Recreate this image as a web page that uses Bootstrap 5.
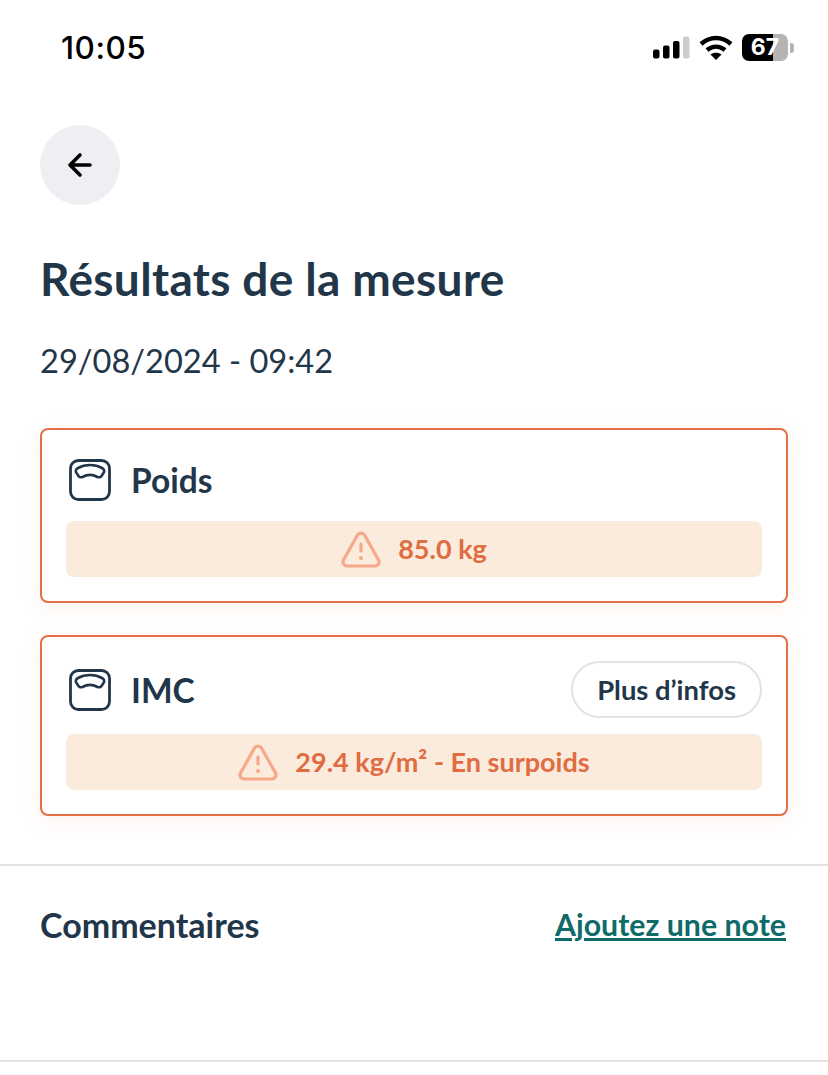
<!DOCTYPE html>
<html lang="fr"><head><meta charset="utf-8"><title>Résultats</title>
<link rel="stylesheet" href="https://cdn.jsdelivr.net/npm/bootstrap@5.3.0/dist/css/bootstrap.min.css">
<style>
html,body{height:1075px;overflow:hidden;background:#fff}
body{font-family:Lato,sans-serif;color:#22364a}
.status-row{height:97px;padding:31px 34px 0 61px;align-items:flex-start}
.clock{font-family:Inter,sans-serif;font-weight:500;font-size:31.500px;line-height:34px;color:#000;letter-spacing:.5px}
.status-icons{margin-top:3px;gap:9px}
.batt{width:46px;height:27px;border-radius:7px;background:linear-gradient(90deg,#000 0,#000 67%,#b4b4b4 67%);color:#fff;font:700 23px/27px Inter,sans-serif;text-align:center}
.batt-wrap{gap:2px}
.batt-cap{width:4px;height:10px;background:#b4b4b4;border-radius:0 3px 3px 0}
.main-pad{padding:0 40px}
.back-btn{width:80px;height:80px;margin-top:28px;background:#eeeff3;border:0}
.page-title{font-size:46px;line-height:50px;font-weight:700;letter-spacing:.35px;margin:49px 0 0;color:#22364a}
.page-date{font-size:32.600px;line-height:40px;margin:37px 0 0;color:#22364a;font-weight:400}
.res-card{border:2px solid #e26f47;border-radius:8px;padding:24px 24px 24px;box-shadow:0 4px 20px rgba(227,111,71,.1)}
.res-card+.res-card{margin-top:32px}
.res-head{min-height:51px;gap:20px;margin-bottom:16px}
.scale-ico{margin-left:3px}
.res-name{font-size:33.500px;font-weight:700;line-height:40px;margin:0}
.res-band{height:56px;background:#fbebdd;border-radius:8px;color:#e06c42;font-size:27px;font-weight:700;gap:17px}
.info-pill{height:57px;border:2px solid #e2e3e8;color:#22364a;font-size:27.400px;font-weight:700;padding:0 24px;background:#fff}
.sep{border-top:2px solid #e4e4e4;opacity:1;margin:0}
.notes-row{height:122px;padding:0 42px 4px 40px}
.notes-title{font-size:34px;font-weight:700;margin:0;color:#22364a}
.notes-link{font-size:30.300px;font-weight:700;color:#0f6b68}
</style></head><body>
<div class="d-flex justify-content-between status-row">
 <span class="clock">10:05</span>
 <div class="d-flex align-items-center status-icons">
  <svg width="37" height="24" viewBox="0 0 37 24"><rect x="0" y="13.500" width="6.500" height="9" rx="2" fill="#000"/><rect x="10" y="9.500" width="6.500" height="13" rx="2" fill="#000"/><rect x="20" y="5" width="6.500" height="17.500" rx="2" fill="#000"/><rect x="30" y="0.500" width="6.500" height="22" rx="2" fill="#ccc"/></svg>
  <svg width="34" height="26" viewBox="0 0 34 26"><path d="M2 9C11 1 23 1 32 9M8 15C13.500 10.500 20.500 10.500 26 15" fill="none" stroke="#000" stroke-width="4.500"/><path d="M17 25 11.500 19.500C14.500 17 19.500 17 22.500 19.500Z" fill="#000"/></svg>
  <div class="d-flex align-items-center batt-wrap"><div class="batt">67</div><div class="batt-cap"></div></div>
 </div>
</div>
<div class="main-pad">
 <button class="btn rounded-circle p-0 d-flex align-items-center justify-content-center back-btn" aria-label="Retour">
  <svg width="26" height="26" viewBox="0 0 26 26"><path d="M23 13H3M13 3 3 13 13 23" fill="none" stroke="#000" stroke-width="3.600" stroke-linecap="round" stroke-linejoin="round"/></svg>
 </button>
 <h1 class="page-title">Résultats de la mesure</h1>
 <p class="page-date">29/08/2024 - 09:42</p>
 <div style="height:47px"></div>
 <div class="res-card bg-white">
  <div class="d-flex align-items-center res-head">
   <svg class="scale-ico" width="42" height="42" viewBox="0 0 42 42"><rect x="1.500" y="1.500" width="39" height="39" rx="8" fill="none" stroke="#22364a" stroke-width="2.800"/><path d="M9 9C16 5 26 5 33 9C35 10 36 12 34.500 14L32.500 17C31.500 18.500 30 18.500 28.500 18C24 15.500 18 15.500 13.500 18C12 18.500 10.500 18.500 9.500 17L7.500 14C6 12 7 10 9 9Z" fill="none" stroke="#22364a" stroke-width="2.600" stroke-linejoin="round"/></svg>
   <h2 class="res-name">Poids</h2>
  </div>
  <div class="d-flex align-items-center justify-content-center res-band">
   <svg width="40" height="37" viewBox="0 0 40 37"><path d="M16.500 4C18 1.500 22 1.500 23.500 4L37.500 29C39 32 37 35 34 35H6C3 35 1 32 2.500 29Z" fill="none" stroke="#f8a88a" stroke-width="3.200" stroke-linejoin="round"/><path d="M20 13V20" stroke="#f8a88a" stroke-width="3.200" stroke-linecap="round"/><circle cx="20" cy="27" r="2" fill="#f8a88a"/></svg>
   <span>85.0 kg</span>
  </div>
 </div>
 <div class="res-card bg-white">
  <div class="d-flex align-items-center res-head">
   <svg class="scale-ico" width="42" height="42" viewBox="0 0 42 42"><rect x="1.500" y="1.500" width="39" height="39" rx="8" fill="none" stroke="#22364a" stroke-width="2.800"/><path d="M9 9C16 5 26 5 33 9C35 10 36 12 34.500 14L32.500 17C31.500 18.500 30 18.500 28.500 18C24 15.500 18 15.500 13.500 18C12 18.500 10.500 18.500 9.500 17L7.500 14C6 12 7 10 9 9Z" fill="none" stroke="#22364a" stroke-width="2.600" stroke-linejoin="round"/></svg>
   <h2 class="res-name">IMC</h2>
   <button class="btn rounded-pill ms-auto info-pill">Plus d’infos</button>
  </div>
  <div class="d-flex align-items-center justify-content-center res-band">
   <svg width="40" height="37" viewBox="0 0 40 37"><path d="M16.500 4C18 1.500 22 1.500 23.500 4L37.500 29C39 32 37 35 34 35H6C3 35 1 32 2.500 29Z" fill="none" stroke="#f8a88a" stroke-width="3.200" stroke-linejoin="round"/><path d="M20 13V20" stroke="#f8a88a" stroke-width="3.200" stroke-linecap="round"/><circle cx="20" cy="27" r="2" fill="#f8a88a"/></svg>
   <span>29.4 kg/m² - En surpoids</span>
  </div>
 </div>
</div>
<div style="height:48px"></div>
<hr class="sep">
<div class="d-flex justify-content-between align-items-center notes-row">
 <h3 class="notes-title">Commentaires</h3>
 <a href="#" class="notes-link">Ajoutez une note</a>
</div>
<div style="height:72px"></div>
<hr class="sep">
</body></html>
